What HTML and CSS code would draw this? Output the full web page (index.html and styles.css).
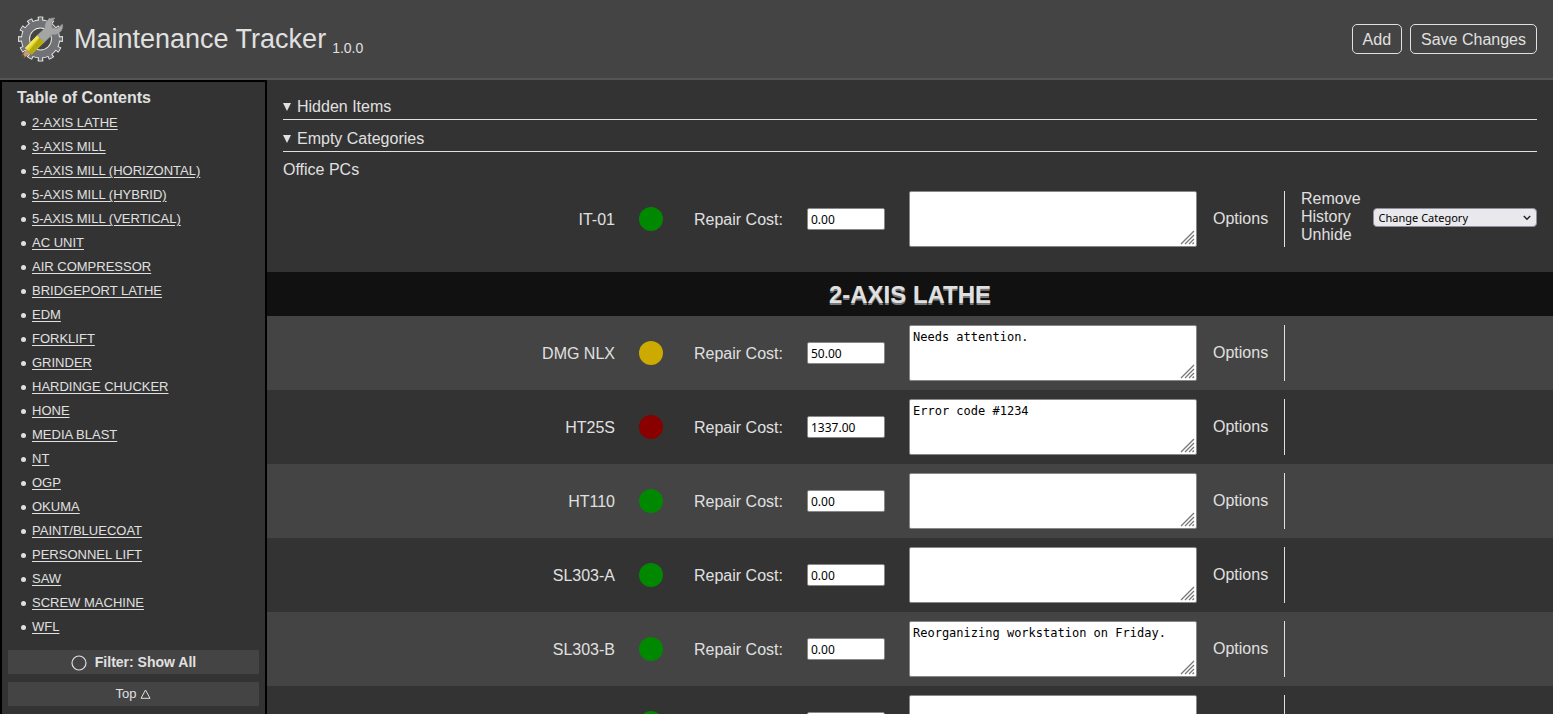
FILE: index.html
```html
<!DOCTYPE html>
<html lang="en">
<head>
<meta charset="utf-8">
<title>Maintenance Tracker</title>
<link rel="stylesheet" href="styles.css">
</head>
<body>
<svg class="defs" width="0" height="0" aria-hidden="true">
  <symbol id="grip" viewBox="0 0 15 15"><path d="M1 14 14 1M5 14l9-9M9 14l5-5M12.500 14l1.500-1.500" fill="none" stroke="#777" stroke-width="1.300"/></symbol>
</svg>
<header class="topbar">
  <div class="brand">
    <svg class="logo" viewBox="0 0 48 48" aria-hidden="true">
      <g fill="none" stroke="#eee">
        <circle cx="24.500" cy="24" r="19.500" stroke-width="6" pathLength="120" stroke-dasharray="5.200 4.800" stroke-dashoffset="2.600"/>
        <circle cx="24.500" cy="24" r="15" stroke-width="9"/>
      </g>
      <g fill="none" stroke="#707275">
        <circle cx="24.500" cy="24" r="19.500" stroke-width="4.400" pathLength="120" stroke-dasharray="3.400 6.600" stroke-dashoffset="1.700"/>
        <circle cx="24.500" cy="24" r="15" stroke-width="7.200"/>
      </g>
      <path d="M21 20.500 29 13C28 7.500 33 2 39 3L35.500 7.500 36 13 41.500 13.500 46.500 9C48 15.500 42 20.500 36.500 19.500L28 27.500z" fill="#a5a5a5" stroke="#8b8b8b" stroke-width=".6"/>
      <path d="M21 20.500 28 27.500 15.500 39.500 9 33z" fill="#d8cf20"/>
      <path d="M23.500 23 28 27.500 15.500 39.500 12.500 36.500z" fill="#b5a910"/>
      <path d="M21 20.500 23 22.500 11 35 9 33z" fill="#eee656"/>
      <path d="M10.500 34.500 14 38.500 8 43 5.500 41z" fill="#c59b70"/>
      <path d="M7 39 9 42 3.500 45z" fill="#51443a"/>
    </svg>
    <h1>Maintenance Tracker</h1>
    <span class="version">1.0.0</span>
  </div>
  <div class="toolbar">
    <button type="button">Add</button>
    <button type="button">Save Changes</button>
  </div>
</header>
<div class="layout">
  <nav class="sidebar" aria-label="Table of Contents">
    <h2>Table of Contents</h2>
    <ul>
      <li><a href="#lathe">2-AXIS LATHE</a></li>
      <li><a href="#c2">3-AXIS MILL</a></li>
      <li><a href="#c3">5-AXIS MILL (HORIZONTAL)</a></li>
      <li><a href="#c4">5-AXIS MILL (HYBRID)</a></li>
      <li><a href="#c5">5-AXIS MILL (VERTICAL)</a></li>
      <li><a href="#c6">AC UNIT</a></li>
      <li><a href="#c7">AIR COMPRESSOR</a></li>
      <li><a href="#c8">BRIDGEPORT LATHE</a></li>
      <li><a href="#c9">EDM</a></li>
      <li><a href="#c10">FORKLIFT</a></li>
      <li><a href="#c11">GRINDER</a></li>
      <li><a href="#c12">HARDINGE CHUCKER</a></li>
      <li><a href="#c13">HONE</a></li>
      <li><a href="#c14">MEDIA BLAST</a></li>
      <li><a href="#c15">NT</a></li>
      <li><a href="#c16">OGP</a></li>
      <li><a href="#c17">OKUMA</a></li>
      <li><a href="#c18">PAINT/BLUECOAT</a></li>
      <li><a href="#c19">PERSONNEL LIFT</a></li>
      <li><a href="#c20">SAW</a></li>
      <li><a href="#c21">SCREW MACHINE</a></li>
      <li><a href="#c22">WFL</a></li>
    </ul>
    <div class="side-actions">
      <button type="button" class="filter"><svg viewBox="0 0 16 16" aria-hidden="true"><circle cx="8" cy="9" r="7" fill="none" stroke="#e0e0e0" stroke-width="1.200"/></svg>Filter: Show All</button>
      <button type="button">Top <svg class="tri" viewBox="0 0 11 10" aria-hidden="true"><path d="M5.500 1 10 9.300H1z" fill="none" stroke="#e0e0e0"/></svg></button>
    </div>
  </nav>
  <main class="content">
    <div class="extras">
      <details open>
        <summary>Hidden Items</summary>
      </details>
      <details open>
        <summary>Empty Categories</summary>
        <p>Office PCs</p>
        <div class="item">
          <span class="name">IT-01</span><span class="dot ok"></span>
          <label for="r0">Repair Cost:</label><input id="r0" type="text" value="0.00">
          <div class="note"><textarea aria-label="Notes for IT-01"></textarea><svg><use href="#grip"/></svg></div>
          <button type="button" class="link">Options</button>
          <div class="actions">
            <div class="links"><button type="button" class="link">Remove</button><button type="button" class="link">History</button><button type="button" class="link">Unhide</button></div>
            <div class="picker"><select aria-label="Change Category"><option>Change Category</option></select><svg viewBox="0 0 8 6" aria-hidden="true"><path d="M.8 1 4 4.300 7.200 1" fill="none" stroke="#222" stroke-width="1.400"/></svg></div>
          </div>
        </div>
      </details>
    </div>
    <section id="lathe">
      <h2>2-AXIS LATHE</h2>
      <div class="item">
        <span class="name">DMG NLX</span><span class="dot warn"></span>
        <label for="r1">Repair Cost:</label><input id="r1" type="text" value="50.00">
        <div class="note"><textarea aria-label="Notes for DMG NLX">Needs attention.</textarea><svg><use href="#grip"/></svg></div>
        <button type="button" class="link">Options</button><div class="actions"></div>
      </div>
      <div class="item">
        <span class="name">HT25S</span><span class="dot down"></span>
        <label for="r2">Repair Cost:</label><input id="r2" type="text" value="1337.00">
        <div class="note"><textarea aria-label="Notes for HT25S">Error code #1234</textarea><svg><use href="#grip"/></svg></div>
        <button type="button" class="link">Options</button><div class="actions"></div>
      </div>
      <div class="item">
        <span class="name">HT110</span><span class="dot ok"></span>
        <label for="r3">Repair Cost:</label><input id="r3" type="text" value="0.00">
        <div class="note"><textarea aria-label="Notes for HT110"></textarea><svg><use href="#grip"/></svg></div>
        <button type="button" class="link">Options</button><div class="actions"></div>
      </div>
      <div class="item">
        <span class="name">SL303-A</span><span class="dot ok"></span>
        <label for="r4">Repair Cost:</label><input id="r4" type="text" value="0.00">
        <div class="note"><textarea aria-label="Notes for SL303-A"></textarea><svg><use href="#grip"/></svg></div>
        <button type="button" class="link">Options</button><div class="actions"></div>
      </div>
      <div class="item">
        <span class="name">SL303-B</span><span class="dot ok"></span>
        <label for="r5">Repair Cost:</label><input id="r5" type="text" value="0.00">
        <div class="note"><textarea aria-label="Notes for SL303-B">Reorganizing workstation on Friday.</textarea><svg><use href="#grip"/></svg></div>
        <button type="button" class="link">Options</button><div class="actions"></div>
      </div>
      <div class="item">
        <span class="name"></span><span class="dot ok"></span>
        <span></span><input type="text" aria-label="Repair Cost">
        <div class="note"><textarea aria-label="Notes"></textarea><svg><use href="#grip"/></svg></div>
        <span></span><div class="actions"></div>
      </div>
    </section>
  </main>
</div>
</body>
</html>
```
FILE: styles.css
```css
* { box-sizing: border-box; }

body {
  margin: 0;
  height: 100vh;
  display: flex;
  flex-direction: column;
  overflow: hidden;
  background: #333;
  color: #e0e0e0;
  font: 16px/18px "Liberation Sans", Arial, sans-serif;
}

h1, h2, p, ul { margin: 0; padding: 0; }
button { font: inherit; color: inherit; cursor: pointer; }
.defs { position: absolute; }

.topbar {
  flex: none;
  display: flex;
  align-items: center;
  justify-content: space-between;
  height: 80px;
  padding: 0 16px;
  background: #444;
  border-bottom: 2px solid #555;
}
.brand { display: flex; align-items: center; }
.logo { width: 48px; height: 48px; margin-right: 10px; }
.brand h1 { font-size: 27px; line-height: 32px; font-weight: normal; }
.version { padding-top: 18px; margin-left: 6px; font-size: 14px; }
.toolbar { display: flex; gap: 8px; }
.toolbar button {
  height: 30px;
  padding: 2px 10px 0;
  background: none;
  border: 1px solid #e0e0e0;
  border-radius: 5px;
}

.layout { flex: 1; min-height: 0; display: flex; }

.sidebar {
  flex: none;
  width: 267px;
  padding: 6px;
  border: 2px solid #000;
  border-bottom: 0;
  overflow: auto;
  scrollbar-width: none;
}
.sidebar h2 { padding-left: 9px; font-size: 16px; line-height: 20px; }
.sidebar ul { padding: 3px 0 11px 13px; list-style: none; font-size: 13px; line-height: 24px; }
.sidebar li { display: flex; align-items: center; gap: 6px; }
.sidebar li::before {
  content: "";
  width: 5px;
  height: 5px;
  border-radius: 50%;
  background: #e0e0e0;
}
.sidebar a { color: inherit; text-underline-offset: 2px; }
.side-actions { display: grid; gap: 8px; }
.side-actions button {
  display: flex;
  align-items: center;
  justify-content: center;
  gap: 4px;
  height: 24px;
  padding: 0;
  border: 0;
  background: #444;
  font-size: 13px;
}
.side-actions .filter { gap: 8px; font-size: 14px; font-weight: bold; }
.filter svg { width: 16px; height: 16px; overflow: visible; }
.tri { width: 11px; height: 10px; }

.content { flex: 1; min-width: 0; overflow: auto; scrollbar-width: none; }
.extras { display: grid; gap: 8px; padding: 16px; }
summary {
  display: flex;
  align-items: center;
  gap: 6px;
  height: 24px;
  padding-bottom: 2px;
  border-bottom: 1px solid #e0e0e0;
}
summary::before {
  content: "";
  border: 4px solid transparent;
  border-top: 8px solid #e0e0e0;
  border-bottom: 0;
}
.extras p { padding: 9px 0 3px; }

section h2 {
  padding-top: 2px;
  background: #111;
  text-align: center;
  font-size: 24px;
  line-height: 42px;
  text-shadow: 0 2px #777;
}

.item {
  display: grid;
  grid-template-columns: 1fr 24px 112px 86px 288px 55px 253px;
  align-items: center;
  column-gap: 16px;
  padding: 9px 0;
}
section .item { padding: 9px 16px; }
section .item:nth-of-type(odd) { background: #444; }
.name { padding: 2px 8px 0 0; text-align: right; }
.dot { width: 24px; height: 24px; border-radius: 50%; }
.ok { background: #080; }
.warn { background: #ca0; }
.down { background: #800; }
.item label { padding: 2px 0 0 15px; white-space: nowrap; }
.item input {
  width: 78px;
  height: 22px;
  padding: 0 3px;
  border: 1px solid #888;
  border-radius: 2px;
  background: #fff;
  color: #000;
  font: 12px/20px "Noto Sans", sans-serif;
}
.note { position: relative; display: grid; }
.note textarea {
  width: 100%;
  height: 56px;
  padding: 4px 3px;
  border: 1px solid #888;
  border-radius: 2px;
  resize: none;
  background: #fff;
  color: #000;
  font: 12px/15px "DejaVu Sans Mono", monospace;
}
.note svg { position: absolute; right: 2px; bottom: 2px; width: 15px; height: 15px; pointer-events: none; }
.link { padding: 0; border: 0; background: none; text-align: left; }
.actions {
  display: flex;
  align-items: center;
  gap: 12px;
  height: 56px;
  padding-left: 16px;
  border-left: 1px solid #e0e0e0;
}
.links { display: grid; padding-bottom: 5px; }
.picker { flex: 1; position: relative; display: grid; padding-bottom: 3px; }
.picker select {
  appearance: none;
  height: 19px;
  padding: 0 5px;
  border: 1px solid #8f8f9d;
  border-radius: 4px;
  background: #e9e9ed;
  color: #000;
  font: 11px/17px "Noto Sans", sans-serif;
}
.picker svg { position: absolute; right: 6px; top: 7px; width: 8px; height: 6px; pointer-events: none; }
```
